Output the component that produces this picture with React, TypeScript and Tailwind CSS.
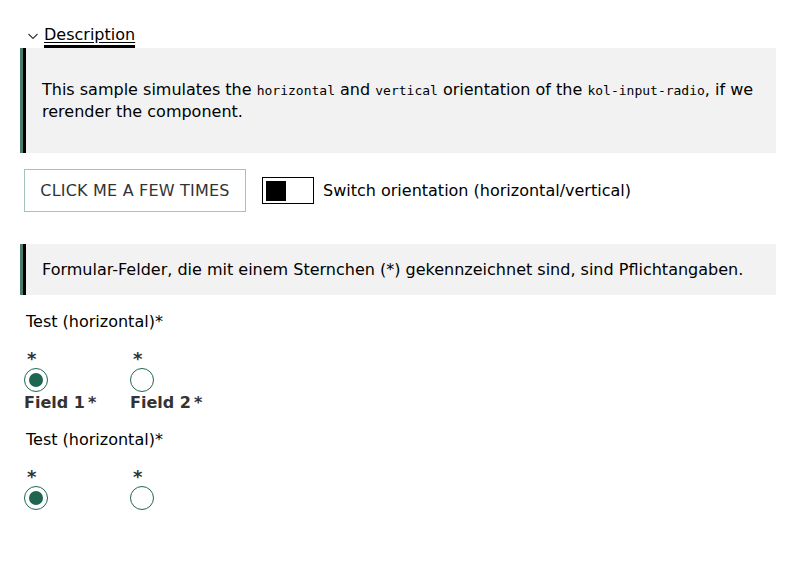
import React from "react";

const sans = { fontFamily: '"DejaVu Sans", Verdana, sans-serif' };
const mono = { fontFamily: '"DejaVu Sans Mono", monospace' };

function Radio({ checked }: { checked?: boolean }) {
  return (
    <span className="flex h-[24px] w-[24px] items-center justify-center rounded-full border-[1.5px] border-[#1f6650] bg-white">
      {checked && <span className="h-[14px] w-[14px] rounded-full bg-[#1f6650]" />}
    </span>
  );
}

function Option({ label, checked, showLabel }: { label: string; checked?: boolean; showLabel: boolean }) {
  return (
    <div className="flex w-[106px] flex-col items-start">
      <span className="ml-[3px] h-[22px] text-[18px] font-bold leading-[30px] text-[#333]">*</span>
      <span className="mt-[2px]"><Radio checked={checked} /></span>
      {showLabel && (
        <span className="text-[16px] font-bold leading-[22px] text-[#333]">
          {label}
          <span className="ml-[3px]">*</span>
        </span>
      )}
    </div>
  );
}

function Group({ showLabels }: { showLabels: boolean }) {
  return (
    <div className="flex flex-col">
      <div className="ml-[2px] text-[16px] leading-[22px] text-black">Test (horizontal)*</div>
      <div className="mt-[11px] flex">
        <Option label="Field 1" checked showLabel={showLabels} />
        <Option label="Field 2" showLabel={showLabels} />
      </div>
    </div>
  );
}

export default function App() {
  return (
    <div className="min-h-[588px] bg-white px-[20px] pt-[24px] text-black" style={sans}>
      <div className="flex items-center pl-[8px]">
        <svg width="10" height="7" viewBox="0 0 10 7" className="mr-[6px] mt-[1px]">
          <path d="M0.5 1 L5 5.5 L9.5 1" fill="none" stroke="#333" strokeWidth="1.1" />
        </svg>
        <span className="border-b-[3px] border-black text-[16px] leading-[21px] underline underline-offset-[2px]">
          Description
        </span>
      </div>
      <div className="w-[756px] border-l-[3px] border-[#4a7d6a] bg-[#f2f2f2]">
        <div className="border-l-[3px] border-black px-[16px] py-[31px] text-[16px] leading-[21px]">
          This sample simulates the <code className="text-[13px]" style={mono}>horizontal</code> and{" "}
          <code className="text-[13px]" style={mono}>vertical</code> orientation of the{" "}
          <code className="text-[13px]" style={mono}>kol-input-radio</code>, if we rerender the component.
        </div>
      </div>
      <div className="mt-[16px] flex items-center pl-[4px]">
        <button className="h-[43px] w-[222px] border border-[#a3c2ba] bg-white text-[16px] uppercase tracking-[0.2px] text-[#333]">
          Click me a few times
        </button>
        <span className="ml-[16px] flex h-[27px] w-[52px] items-center border border-black bg-white px-[3px]">
          <span className="h-[20px] w-[20px] bg-black" />
        </span>
        <span className="ml-[9px] text-[16px] text-black">Switch orientation (horizontal/vertical)</span>
      </div>
      <div className="mt-[32px] w-[756px] border-l-[3px] border-[#4a7d6a] bg-[#f2f2f2]">
        <div className="border-l-[3px] border-black px-[16px] py-[15px] text-[16px] leading-[21px]">
          Formular-Felder, die mit einem Sternchen (*) gekennzeichnet sind, sind Pflichtangaben.
        </div>
      </div>
      <div className="mt-[16px] pl-[4px]">
        <Group showLabels />
        <div className="mt-[15px]">
          <Group showLabels={false} />
        </div>
      </div>
    </div>
  );
}
